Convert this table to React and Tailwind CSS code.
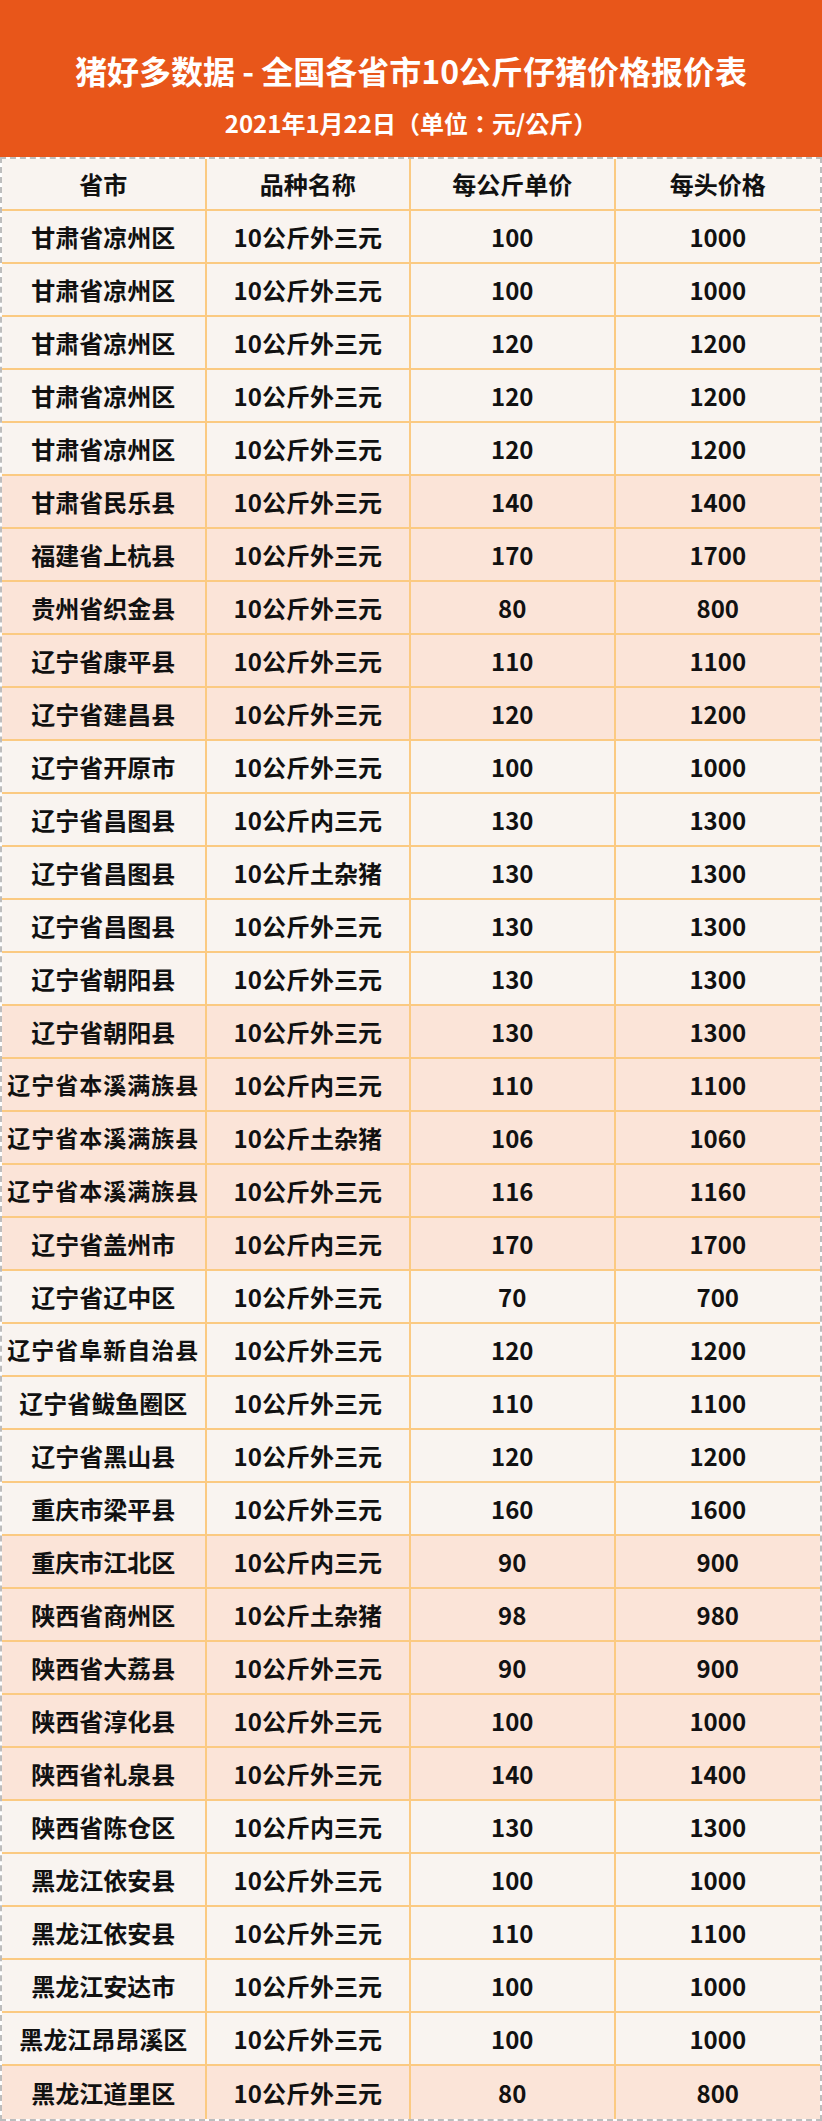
import React from "react";

// 省市, 品种, 每公斤单价, 每头价格, 底色 (p = 浅橙), 加宽
const rows = [
  ["甘肃省凉州区", "10公斤外三元", "100", "1000"],
  ["甘肃省凉州区", "10公斤外三元", "100", "1000"],
  ["甘肃省凉州区", "10公斤外三元", "120", "1200"],
  ["甘肃省凉州区", "10公斤外三元", "120", "1200"],
  ["甘肃省凉州区", "10公斤外三元", "120", "1200"],
  ["甘肃省民乐县", "10公斤外三元", "140", "1400", "p"],
  ["福建省上杭县", "10公斤外三元", "170", "1700", "p"],
  ["贵州省织金县", "10公斤外三元", "80", "800", "p"],
  ["辽宁省康平县", "10公斤外三元", "110", "1100", "p"],
  ["辽宁省建昌县", "10公斤外三元", "120", "1200", "p"],
  ["辽宁省开原市", "10公斤外三元", "100", "1000"],
  ["辽宁省昌图县", "10公斤内三元", "130", "1300"],
  ["辽宁省昌图县", "10公斤土杂猪", "130", "1300"],
  ["辽宁省昌图县", "10公斤外三元", "130", "1300"],
  ["辽宁省朝阳县", "10公斤外三元", "130", "1300"],
  ["辽宁省朝阳县", "10公斤外三元", "130", "1300", "p"],
  ["辽宁省本溪满族县", "10公斤内三元", "110", "1100", "p", true],
  ["辽宁省本溪满族县", "10公斤土杂猪", "106", "1060", "p", true],
  ["辽宁省本溪满族县", "10公斤外三元", "116", "1160", "p", true],
  ["辽宁省盖州市", "10公斤内三元", "170", "1700", "p"],
  ["辽宁省辽中区", "10公斤外三元", "70", "700"],
  ["辽宁省阜新自治县", "10公斤外三元", "120", "1200", "", true],
  ["辽宁省鲅鱼圈区", "10公斤外三元", "110", "1100"],
  ["辽宁省黑山县", "10公斤外三元", "120", "1200"],
  ["重庆市梁平县", "10公斤外三元", "160", "1600"],
  ["重庆市江北区", "10公斤内三元", "90", "900", "p"],
  ["陕西省商州区", "10公斤土杂猪", "98", "980", "p"],
  ["陕西省大荔县", "10公斤外三元", "90", "900", "p"],
  ["陕西省淳化县", "10公斤外三元", "100", "1000", "p"],
  ["陕西省礼泉县", "10公斤外三元", "140", "1400", "p"],
  ["陕西省陈仓区", "10公斤内三元", "130", "1300"],
  ["黑龙江依安县", "10公斤外三元", "100", "1000"],
  ["黑龙江依安县", "10公斤外三元", "110", "1100"],
  ["黑龙江安达市", "10公斤外三元", "100", "1000"],
  ["黑龙江昂昂溪区", "10公斤外三元", "100", "1000"],
  ["黑龙江道里区", "10公斤外三元", "80", "800", "p"],
];

const font = { fontFamily: '"Noto Sans CJK SC", "Noto Sans", sans-serif' };
const subFont = { fontFamily: '"Noto Sans CJK TC", "Noto Sans CJK SC", sans-serif' };

const Cell = ({ children, last, wide, bottom }) => (
  <div
    className={
      "flex items-center justify-center whitespace-nowrap border-[#fbca82] " +
      (last ? "" : "border-r-2 ") +
      (bottom ? "border-b-2 " : "") +
      (wide ? "text-[23px] tracking-[1px]" : "")
    }
  >
    {children}
  </div>
);

export default function App() {
  return (
    <div className="w-full bg-white text-[#111] font-bold" style={font}>
      <div className="h-[157px] bg-[#e8561a] text-white flex flex-col items-center pt-[48px]">
        <h1 className="text-[32px] leading-[44px] font-bold">
          猪好多数据 - 全国各省市10公斤仔猪价格报价表
        </h1>
        <p className="text-[24px] leading-[32px] mt-[15px]" style={subFont}>
          2021年1月22日（单位：元/公斤）
        </p>
      </div>

      <div className="border-2 border-dashed border-[#bdbdbd] text-[24px]">
        <div className="grid grid-cols-4 h-[52px] bg-[#f9f4f0]">
          <Cell bottom>省市</Cell>
          <Cell bottom>品种名称</Cell>
          <Cell bottom>每公斤单价</Cell>
          <Cell bottom last>每头价格</Cell>
        </div>
        {rows.map((r, i) => {
          const isLast = i === rows.length - 1;
          return (
            <div
              key={i}
              className={
                "grid grid-cols-4 h-[53px] " +
                (r[4] === "p" ? "bg-[#fbe4d8]" : "bg-[#f9f4f0]")
              }
            >
              <Cell bottom={!isLast} wide={r[5]}>
                {r[0]}
              </Cell>
              <Cell bottom={!isLast}>{r[1]}</Cell>
              <Cell bottom={!isLast}>{r[2]}</Cell>
              <Cell bottom={!isLast} last>
                {r[3]}
              </Cell>
            </div>
          );
        })}
      </div>
    </div>
  );
}
